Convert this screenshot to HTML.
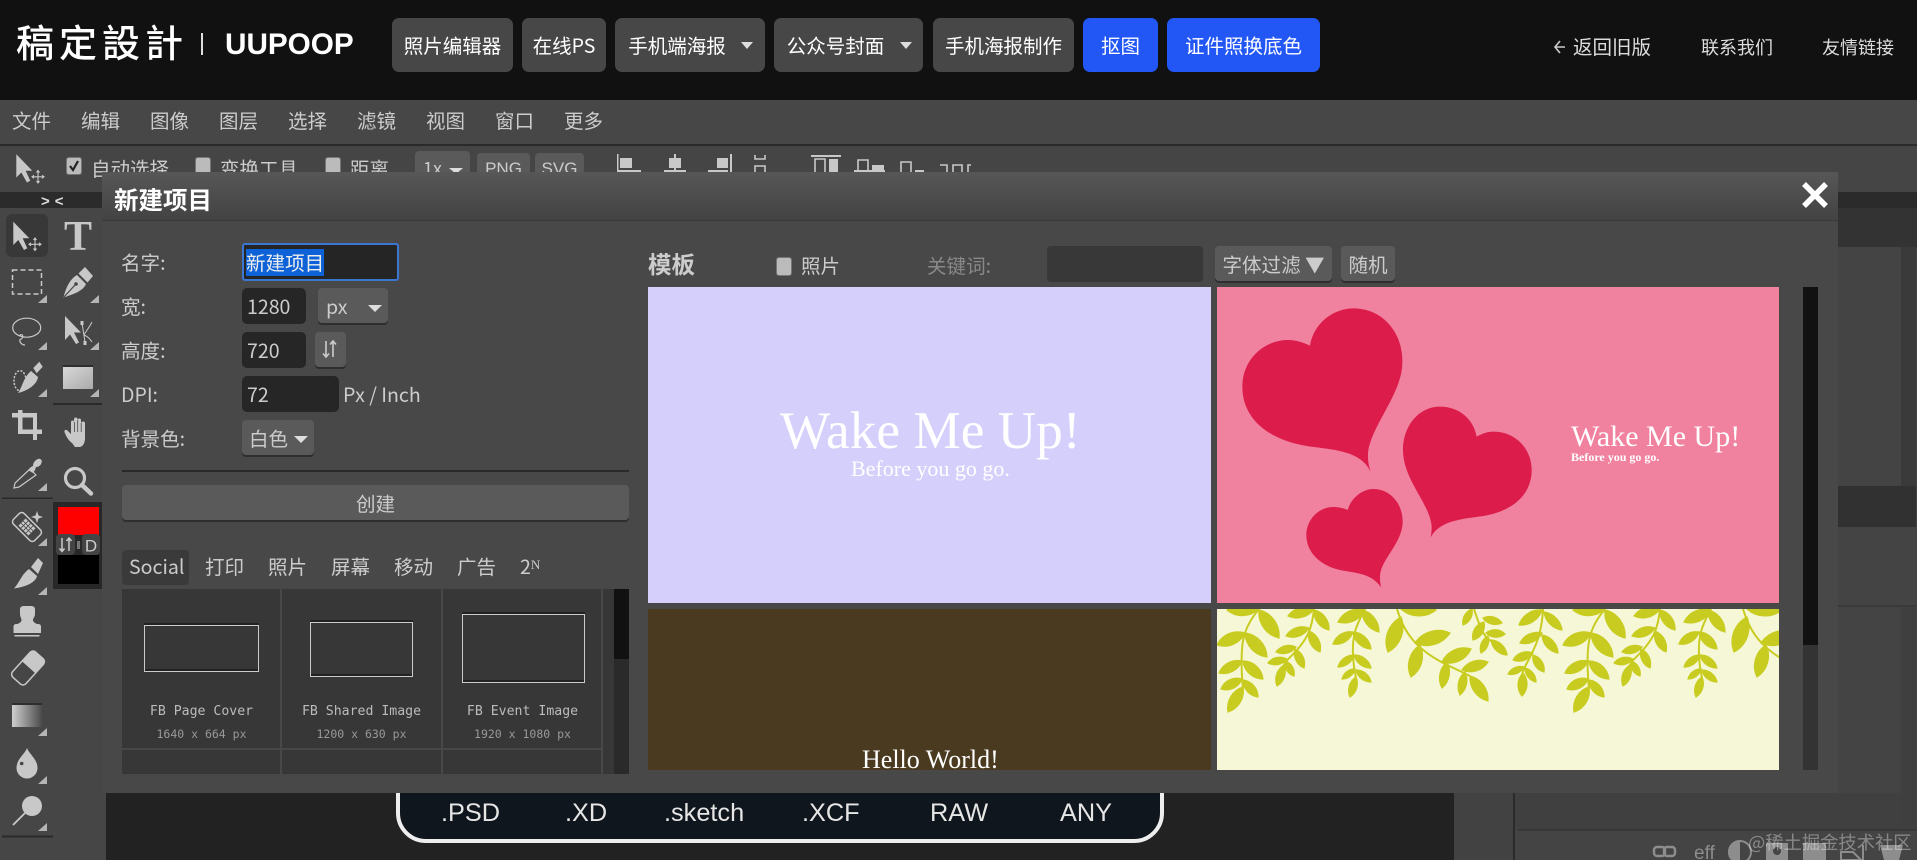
<!DOCTYPE html>
<html lang="zh-CN"><head><meta charset="utf-8"><title>稿定设计 UUPOOP</title>
<style>
html,body{margin:0;padding:0;width:1917px;height:860px;overflow:hidden;background:#444}
body{position:relative;font-family:"Noto Sans CJK SC","Liberation Sans",sans-serif;color:#ccc}
.a{position:absolute;white-space:nowrap}
.hb{position:absolute;top:18px;height:54px;line-height:53px;background:#474747;border-radius:7px;color:#fff;font-size:19.5px;text-align:center;white-space:nowrap}
.blue{background:#2257f6}
.tri{position:absolute;width:0;height:0;border-left:6px solid transparent;border-right:6px solid transparent;border-top:7px solid #ddd}
.m{position:absolute;top:108px;font-size:19.5px;line-height:24px;color:#ccc}
.tl{position:absolute;font-size:19.5px;line-height:24px;color:#ccc;top:156px;white-space:nowrap}
.cb{position:absolute;width:14px;height:16px;background:#bbb;border:1px solid #777;border-radius:3px}
.bt{position:absolute;background:#5a5a5a;border-radius:4px;box-shadow:0 2px 0 #2e2e2e;color:#ccc;text-align:center;white-space:nowrap}
.in{position:absolute;background:#262626;border-radius:5px;color:#ccc;font-size:19.56px;line-height:36px;padding-left:5px;box-sizing:border-box;white-space:nowrap}
.lb{position:absolute;left:121px;font-size:19.56px;line-height:24px;color:#ccc;white-space:nowrap}
.tab{position:absolute;top:554px;font-size:19.56px;line-height:24px;color:#ccc}
.cell{position:absolute;background:#373737}
.r{position:absolute;border:1px solid #ccc;box-sizing:border-box;box-shadow:0 -2px 0 #222,inset 0 -2px 0 #222}
.n{position:absolute;width:159px;text-align:center;font-family:"DejaVu Sans Mono",monospace;font-size:13.2px;line-height:16px;color:#bbb;top:704px}
.s{position:absolute;width:159px;text-align:center;font-family:"DejaVu Sans Mono",monospace;font-size:11.5px;line-height:14px;color:#999;top:727px}
.ext{position:absolute;top:799px;font-family:"Liberation Sans",sans-serif;font-size:25.3px;line-height:28px;color:#e6e6e6}
.sf{position:absolute;font-family:"Liberation Serif",serif;color:#fff;white-space:nowrap;line-height:1}
</style></head><body>

<!-- background panels -->
<div class="a" style="left:0;top:100px;width:1917px;height:44px;background:#474747"></div>
<div class="a" style="left:0;top:144px;width:1917px;height:2px;background:#2a2a2a"></div>
<div class="a" style="left:0;top:146px;width:1917px;height:46px;background:#454545"></div>
<div class="a" style="left:0;top:192px;width:1917px;height:16px;background:#2b2b2b"></div>
<div class="a" style="left:41px;top:195px;font-size:15px;line-height:14px;color:#ddd;font-family:'Liberation Sans',sans-serif;font-weight:bold;letter-spacing:5px">&gt;&lt;</div>
<div class="a" style="left:0;top:208px;width:106px;height:652px;background:#464646"></div>

<!-- canvas -->
<div class="a" style="left:106px;top:208px;width:1348px;height:652px;background:#222"></div>
<div class="a" style="left:396px;top:700px;width:768px;height:143px;box-sizing:border-box;background:#10161d;border:4px solid #eee;border-radius:0 0 30px 30px"></div>
<div class="ext" style="left:441px">.PSD</div>
<div class="ext" style="left:565px">.XD</div>
<div class="ext" style="left:664px">.sketch</div>
<div class="ext" style="left:802px">.XCF</div>
<div class="ext" style="left:930px">RAW</div>
<div class="ext" style="left:1060px">ANY</div>

<!-- right panels -->
<div class="a" style="left:1454px;top:208px;width:463px;height:652px;background:#424242"></div>
<div class="a" style="left:1513px;top:780px;width:2px;height:80px;background:#2a2a2a"></div>
<div class="a" style="left:1515px;top:208px;width:402px;height:39px;background:#333"></div>
<div class="a" style="left:1838px;top:247px;width:63px;height:239px;background:#444"></div>
<div class="a" style="left:1901px;top:247px;width:15px;height:239px;background:#3a3a3a"></div>
<div class="a" style="left:1838px;top:486px;width:78px;height:41px;background:#313131"></div>
<div class="a" style="left:1838px;top:527px;width:78px;height:78px;background:#444"></div>
<div class="a" style="left:1838px;top:605px;width:78px;height:2px;background:#3a3a3a"></div>
<div class="a" style="left:1838px;top:607px;width:63px;height:222px;background:#444"></div>
<div class="a" style="left:1901px;top:607px;width:15px;height:222px;background:#3f3f3f"></div>
<div class="a" style="left:1515px;top:793px;width:386px;height:36px;background:#404040"></div>
<div class="a" style="left:1518px;top:829px;width:399px;height:2px;background:#383838"></div>
<div class="a" style="left:1515px;top:831px;width:402px;height:29px;background:#444"></div>
<svg class="a" style="left:1640px;top:830px" width="277" height="30" viewBox="1640 830 277 30">
<g fill="none" stroke="#8d8d8d" stroke-width="2.5"><rect x="1654" y="847" width="11" height="9" rx="3"/><rect x="1664" y="847" width="11" height="9" rx="3"/></g>
<path d="M1740 840a12 12 0 0 0 0 24z" fill="#8d8d8d"/><circle cx="1740" cy="852" r="11" fill="none" stroke="#8d8d8d" stroke-width="2"/>
<rect x="1766" y="843" width="22" height="17" fill="#8d8d8d"/><circle cx="1777" cy="851" r="4" fill="#444"/><rect x="1803" y="843" width="23" height="17" fill="#8d8d8d"/>
<path d="M1841 852h12l8 8h-20z M1863 845v15" fill="none" stroke="#8d8d8d" stroke-width="2"/><path d="M1880 845h23l-4 15h-15z" fill="#8d8d8d"/>
</svg>
<div class="a" style="left:1694px;top:843px;font:19px/22px 'Liberation Sans',sans-serif;color:#8d8d8d">eff</div>
<div class="a" style="left:1748px;top:829px;font-size:18.3px;line-height:26px;color:rgba(255,255,255,.36)">@稀土掘金技术社区</div>

<!-- header -->
<div class="a" style="left:0;top:0;width:1917px;height:100px;background:#111"></div>
<div class="a" style="left:16px;top:18px;font-family:'Noto Sans CJK TC','Noto Sans CJK SC',sans-serif;font-size:38px;line-height:46px;color:#fff;letter-spacing:5px;font-weight:500">稿定設計</div>
<div class="a" style="left:201px;top:33px;width:2px;height:22px;background:#ddd"></div>
<div class="a" style="left:225px;top:28px;font-family:'Liberation Sans',sans-serif;font-weight:bold;font-size:29.7px;line-height:34px;color:#fff">UUPOOP</div>

<div class="hb" style="left:392px;width:121px">照片编辑器</div>
<div class="hb" style="left:522px;width:84px">在线PS</div>
<div class="hb" style="left:615px;width:150px;padding-right:26px;box-sizing:border-box">手机端海报</div><div class="tri" style="left:741px;top:42px"></div>
<div class="hb" style="left:774px;width:149px;padding-right:26px;box-sizing:border-box">公众号封面</div><div class="tri" style="left:900px;top:42px"></div>
<div class="hb" style="left:933px;width:141px">手机海报制作</div>
<div class="hb blue" style="left:1083px;width:75px">抠图</div>
<div class="hb blue" style="left:1167px;width:153px">证件照换底色</div>

<svg class="a" style="left:1552px;top:38px" width="16" height="18"><path d="M8 3 3 9l5 6M3 9h10" fill="none" stroke="#ccc" stroke-width="1.6"/></svg>
<div class="a" style="left:1573px;top:33px;font-size:19.5px;line-height:26px;color:#ddd">返回旧版</div>
<div class="a" style="left:1701px;top:34px;font-size:18px;line-height:26px;color:#ddd">联系我们</div>
<div class="a" style="left:1822px;top:34px;font-size:18px;line-height:26px;color:#ddd">友情链接</div>

<!-- menu -->
<div class="m" style="left:12px">文件</div><div class="m" style="left:81px">编辑</div><div class="m" style="left:150px">图像</div><div class="m" style="left:219px">图层</div><div class="m" style="left:288px">选择</div><div class="m" style="left:357px">滤镜</div><div class="m" style="left:426px">视图</div><div class="m" style="left:495px">窗口</div><div class="m" style="left:564px">更多</div>

<!-- toolbar -->
<div class="cb" style="left:66px;top:157px"></div>
<svg class="a" style="left:66px;top:157px" width="16" height="18"><path d="M4 9l3 4 5-9" fill="none" stroke="#222" stroke-width="2.2"/></svg>
<div class="tl" style="left:91px">自动选择</div>
<div class="cb" style="left:195px;top:157px"></div><div class="tl" style="left:220px">变换工具</div>
<div class="cb" style="left:325px;top:157px"></div><div class="tl" style="left:350px">距离</div>
<div class="bt" style="left:415px;top:151px;width:55px;height:34px;font-size:18px;line-height:34px;text-align:left;padding-left:8px;box-sizing:border-box;background:#5a5a5a">1x</div>
<div class="tri" style="left:449px;top:168px;border-left-width:7px;border-right-width:7px;border-top-width:6px"></div>
<div class="bt" style="left:477px;top:153px;width:53px;height:30px;font-size:17px;line-height:32px;font-family:'Liberation Sans',sans-serif">PNG</div>
<div class="bt" style="left:535px;top:153px;width:49px;height:30px;font-size:17px;line-height:32px;font-family:'Liberation Sans',sans-serif">SVG</div>

<svg class="a" style="left:600px;top:146px" width="380" height="30" viewBox="600 146 380 30">
<g fill="#c8c8c8">
<rect x="617" y="154" width="1.5" height="18"/><rect x="620" y="158" width="12" height="10"/><rect x="618" y="170" width="23" height="2"/>
<rect x="669" y="158" width="12" height="10"/><rect x="674" y="154" width="2" height="18"/><rect x="664" y="170" width="22" height="2"/>
<rect x="717" y="158" width="11" height="10"/><rect x="730" y="154" width="2" height="18"/><rect x="708" y="170" width="20" height="2"/>
<rect x="811" y="155" width="30" height="2"/><rect x="829" y="159" width="9" height="13"/>
<rect x="872" y="165" width="12" height="7"/><rect x="854" y="170" width="31" height="2"/>
<rect x="915" y="170" width="9" height="2"/>
</g>
<g fill="none" stroke="#c8c8c8" stroke-width="1.6">
<path d="M755 155v4h10v-4M755 172v-6h10v6"/>
<path d="M815 172v-13h10v13"/><path d="M858 172v-12h10v12"/><path d="M901 172v-10h10v10"/>
<path d="M940 165h7v7M953 172v-7h9v7M968 172v-7h3"/>
</g>
</svg>

<!-- tools -->
<svg class="a" style="left:0;top:0" width="110" height="860" viewBox="0 0 110 860">
<defs><linearGradient id="gr"><stop offset="0" stop-color="#cfcfcf"/><stop offset="1" stop-color="#4a4a4a"/></linearGradient>
<linearGradient id="rc" x1="0" x2="1" y1="0" y2="1"><stop offset="0" stop-color="#d8d8d8"/><stop offset="1" stop-color="#aaa"/></linearGradient>
<g id="mv"><path d="M13.3 221.7V245l5-5 5.700 10 3.300-1.700-4.600-10h6.600z" fill="#c8c8c8"/><path d="M35 238v12.500M29 244.300h12M33.500 240l1.500-2 1.500 2M33.500 248.500l1.500 2 1.500-2M31 242.800l-2 1.500 2 1.500M39 242.800l2 1.500-2 1.500" fill="none" stroke="#c8c8c8" stroke-width="1.100"/></g>
<path id="t" d="M9 0v8h-9z" fill="#b5b5b5"/></defs>

<use href="#mv" transform="translate(3,-67.500)"/>
<rect x="6" y="214" width="42" height="43" rx="6" fill="#383838"/>
<use href="#mv"/>
<text x="78" y="250" text-anchor="middle" font-family="Liberation Serif" font-weight="bold" font-size="42" fill="#c8c8c8">T</text>

<rect x="12.500" y="270" width="29" height="24" fill="none" stroke="#c8c8c8" stroke-width="1.500" stroke-dasharray="5 3"/>
<g fill="#b5b5b5"><use href="#t" x="38" y="295"/><use href="#t" x="90" y="295"/><use href="#t" x="38" y="342"/><use href="#t" x="90" y="342"/><use href="#t" x="38" y="389"/><use href="#t" x="90" y="389"/><use href="#t" x="38" y="483"/><use href="#t" x="38" y="538"/><use href="#t" x="38" y="587"/><use href="#t" x="38" y="728"/><use href="#t" x="38" y="776"/><use href="#t" x="38" y="823"/></g>

<g fill="#c8c8c8">
<path d="M85 267l8 9-5.500 6.500-9-9z"/><path d="M77 275l9 9c-3 7-12 10-22.500 13.500 2.500-10.500 6.500-18.500 13.500-22.500z"/>
</g>
<path d="M64 297l11-12" stroke="#464646" stroke-width="1.200"/><circle cx="76" cy="284" r="1.800" fill="#464646"/>

<ellipse cx="26.700" cy="327.700" rx="14" ry="9.500" fill="none" stroke="#c8c8c8" stroke-width="1.200"/>
<path d="M19 336c4-4 5 2 2 3-3 1 0 6 4 6" fill="none" stroke="#c8c8c8" stroke-width="1.200"/>

<path d="M65 316v24l5-5.500 6 9.500 3-1.500-5-10h7z" fill="#c8c8c8"/>
<path d="M82 323l3 19M92 322c-3 6-6 9-8 13 3 1 6 4 8 7" fill="none" stroke="#c8c8c8" stroke-width="1"/><rect x="80.500" y="321" width="3" height="4" fill="#c8c8c8"/><rect x="83.500" y="341" width="3" height="4" fill="#c8c8c8"/>

<ellipse cx="20" cy="380.700" rx="6" ry="10" fill="none" stroke="#c8c8c8" stroke-width="1.500" stroke-dasharray="2 1.500"/>
<path d="M33.300 368l6-6.300 3.400 5-6 6.600z" fill="#c8c8c8"/><path d="M31 371l7 6c-1 8-11 14-20 16 4-5 5-15 13-22z" fill="#c8c8c8"/>

<rect x="63" y="365" width="30" height="2" fill="#2e2e2e"/><rect x="63" y="367" width="30" height="22" fill="url(#rc)"/>
<rect x="53" y="403" width="49" height="2" fill="#2a2a2a"/>

<g fill="#c8c8c8"><rect x="12" y="413" width="25" height="4.500"/><rect x="18" y="410" width="4.500" height="23"/><rect x="18" y="429.500" width="24" height="4.500"/><rect x="33" y="417" width="4" height="23"/></g>

<path d="M72 443c-4-3-6-7-7.500-11-.5-2 1.500-3 3.500-1l3 3v-12c0-2 3-2 3 0v-3c0-2 3.500-2 3.500 0v1c.5-2 3.500-2 3.500 0v3c.5-2 4-2 4 0v15c0 5-2 9-6 9h-4c-1-1-2-3-3-4z" fill="#c8c8c8"/>
<path d="M74.500 422v10M77.700 420v12M81.200 423v9" stroke="#464646" stroke-width="0.800"/>

<path d="M30 469l6 6-17 12-5 1 1-5z" fill="none" stroke="#c8c8c8" stroke-width="1.200"/><path d="M28 470l3-3 2-1c0-3 2-6 5-7 3-1 5 2 3 5-1 2-3 3-5 3l-1 3-2 3z" fill="#c8c8c8"/>

<circle cx="75" cy="478" r="9.500" fill="none" stroke="#c8c8c8" stroke-width="3.200"/><path d="M82 485l9 8.500" stroke="#c8c8c8" stroke-width="4.500" stroke-linecap="round"/>
<rect x="2" y="497.500" width="51" height="1.500" fill="#2a2a2a"/>

<rect x="53" y="502" width="49" height="87" fill="#282828"/>
<rect x="58" y="507" width="41" height="28" fill="#f00"/><rect x="58" y="555" width="41" height="29" fill="#000"/>
<rect x="56" y="534" width="19" height="21" rx="4" fill="#444"/><rect x="82" y="534" width="18" height="21" rx="4" fill="#444"/>
<rect x="77" y="541" width="3" height="8" fill="#777"/>
<path d="M62 538v13M59.500 548.500l2.500 3 2.500-3M69 551v-13M66.500 541l2.500-3 2.500 3" fill="none" stroke="#ccc" stroke-width="1.500"/>
<text x="91" y="551.500" text-anchor="middle" font-family="Liberation Sans" font-size="17" fill="#ccc">D</text>

<g transform="translate(27,527) rotate(45)"><rect x="-15" y="-7.500" width="30" height="15" rx="3.500" fill="none" stroke="#c8c8c8" stroke-width="1.500"/><g fill="#c8c8c8"><rect x="-7" y="-5" width="14" height="10"/></g><path d="M-7-1.500h14M-7 1.500h14M-3.500-5v10M0-5v10M3.500-5v10" stroke="#464646" stroke-width="0.800"/></g>
<path d="M37 511l1.500 4.500 4.500 1.500-4.500 1.500-1.500 4.500-1.500-4.500-4.500-1.500 4.500-1.500z" fill="#c8c8c8"/>

<path d="M29 569l8 7c-1 6-11 11-23 12.500 6-6.500 7-13.500 15-19.500z" fill="#c8c8c8"/><path d="M31 567l7-9 5 5-5 11z" fill="#c8c8c8"/>

<path d="M20 609c0-2 2-3 4-3h7c2 0 4 1 4 3v5c0 3-2 4-2 6 0 2 2 3 4 4h1c2 0 3 1 3 3v6H13.500v-6c0-2 1-3 3-3h1c2-1 4-2 4-4 0-2-1.500-3-1.500-6z" fill="#c8c8c8"/><rect x="14.500" y="635" width="25" height="1.500" fill="#c8c8c8"/>

<g transform="translate(28,668) rotate(-48)"><rect x="-17" y="-9" width="34" height="18" rx="4" fill="none" stroke="#c8c8c8" stroke-width="1.500"/><path d="M1-9h12a4 4 0 0 1 4 4v10a4 4 0 0 1-4 4H1z" fill="#c8c8c8"/></g>

<rect x="12" y="703" width="30" height="2" fill="#2e2e2e"/><rect x="12" y="705" width="30" height="22" fill="url(#gr)"/>

<path d="M27 748c2 6 10.500 11 10.500 20a10.500 10.500 0 0 1-21 0c0-9 8.500-14 10.500-20z" fill="#c8c8c8"/><circle cx="21.700" cy="763.500" r="1.800" fill="#464646"/>

<circle cx="32" cy="806" r="10" fill="#c8c8c8"/><path d="M25 813l-12 12" stroke="#c8c8c8" stroke-width="1.800"/>
<rect x="2" y="835.500" width="51" height="2" fill="#2a2a2a"/>
</svg>

<!-- dialog -->
<div class="a" style="left:102px;top:172px;width:1736px;height:621px;background:#484848"></div>
<div class="a" style="left:102px;top:172px;width:1736px;height:48px;background:linear-gradient(#575757,#434343);border-bottom:1px solid #3a3a3a"></div>
<div class="a" style="left:114px;top:185px;font-size:24.5px;line-height:30px;font-weight:bold;color:#fff">新建项目</div>
<svg class="a" style="left:1800px;top:181px" width="30" height="28"><path d="M4 3 26 25M26 3 4 25" stroke="#fff" stroke-width="5.500"/></svg>

<!-- form -->
<div class="lb" style="top:250px">名字:</div>
<div class="lb" style="top:294px">宽:</div>
<div class="lb" style="top:338px">高度:</div>
<div class="lb" style="top:382px">DPI:</div>
<div class="lb" style="top:426px">背景色:</div>

<div class="a" style="left:242px;top:243px;width:157px;height:38px;box-sizing:border-box;background:#252525;border:2px solid #3b76d1;border-radius:3px"></div>
<div class="a" style="left:246px;top:249px;width:78px;height:27px;background:#0c62d6"></div>
<div class="a" style="left:246px;top:249px;font-size:19.56px;line-height:25px;color:#eee">新建项目</div>

<div class="in" style="left:242px;top:288px;width:64px;height:36px">1280</div>
<div class="bt" style="left:318px;top:288px;width:70px;height:35px;font-size:19.56px;line-height:35px;text-align:left;padding-left:8px;box-sizing:border-box">px</div>
<div class="tri" style="left:368px;top:305px;border-left-width:7px;border-right-width:7px;border-top-width:7px"></div>
<div class="in" style="left:242px;top:332px;width:64px;height:36px">720</div>
<div class="bt" style="left:315px;top:332px;width:31px;height:35px"></div>
<svg class="a" style="left:320px;top:340px" width="20" height="20"><path d="M6 1v16M3 13.500l3 3.500 3-3.500M13 17V1M10 4.500 13 1l3 3.500" fill="none" stroke="#ccc" stroke-width="1.600"/></svg>
<div class="in" style="left:242px;top:376px;width:97px;height:36px">72</div>
<div class="a" style="left:343px;top:382px;font-size:19.56px;line-height:24px">Px / Inch</div>
<div class="bt" style="left:242px;top:420px;width:72px;height:35px;font-size:19.56px;line-height:36px;text-align:left;padding-left:7px;box-sizing:border-box">白色</div>
<div class="tri" style="left:294px;top:436px;border-left-width:7px;border-right-width:7px;border-top-width:7px"></div>
<div class="a" style="left:122px;top:470px;width:507px;height:2px;background:#2a2a2a"></div>
<div class="bt" style="left:122px;top:485px;width:507px;height:35px;font-size:19.56px;line-height:35px">创建</div>

<!-- tabs -->
<div class="a" style="left:122px;top:550px;width:67px;height:35px;background:#3a3a3a;border-radius:4px"></div>
<div class="tab" style="left:129px">Social</div>
<div class="tab" style="left:205px">打印</div><div class="tab" style="left:268px">照片</div><div class="tab" style="left:331px">屏幕</div><div class="tab" style="left:394px">移动</div><div class="tab" style="left:457px">广告</div>
<div class="tab" style="left:520px">2<span style="font-family:'Liberation Serif',serif;font-size:13px;position:relative;top:-5px">N</span></div>

<div class="cell" style="left:122px;top:589px;width:158px;height:159px"></div>
<div class="cell" style="left:282px;top:589px;width:159px;height:159px"></div>
<div class="cell" style="left:443px;top:589px;width:158px;height:159px"></div>
<div class="cell" style="left:122px;top:750px;width:158px;height:24px"></div>
<div class="cell" style="left:282px;top:750px;width:159px;height:24px"></div>
<div class="cell" style="left:443px;top:750px;width:158px;height:24px"></div>
<div class="a" style="left:603px;top:589px;width:11px;height:185px;background:#373737"></div>
<div class="a" style="left:614px;top:589px;width:15px;height:185px;background:#2a2a2a"></div>
<div class="a" style="left:614px;top:589px;width:15px;height:70px;background:#111"></div>
<div class="r" style="left:144px;top:625px;width:115px;height:47px"></div>
<div class="r" style="left:310px;top:622px;width:103px;height:55px"></div>
<div class="r" style="left:462px;top:614px;width:123px;height:69px"></div>
<div class="n" style="left:122px">FB Page Cover</div><div class="s" style="left:122px">1640 x 664 px</div>
<div class="n" style="left:282px">FB Shared Image</div><div class="s" style="left:282px">1200 x 630 px</div>
<div class="n" style="left:443px">FB Event Image</div><div class="s" style="left:443px">1920 x 1080 px</div>

<!-- templates header -->
<div class="a" style="left:648px;top:248px;font-size:23.5px;line-height:30px;font-weight:bold;color:#ccc">模板</div>
<div class="cb" style="left:776px;top:257px;height:17px"></div>
<div class="a" style="left:801px;top:253px;font-size:19.56px;line-height:24px">照片</div>
<div class="a" style="left:927px;top:253px;font-size:19.56px;line-height:24px;color:#888">关键词:</div>
<div class="a" style="left:1047px;top:246px;width:156px;height:36px;background:#383838;border-radius:4px"></div>
<div class="bt" style="left:1215px;top:246px;width:117px;height:35px;font-size:19.56px;line-height:35px">字体过滤 ▼</div>
<div class="bt" style="left:1341px;top:246px;width:54px;height:35px;font-size:19.56px;line-height:35px">随机</div>

<!-- templates -->
<div class="a" style="left:648px;top:287px;width:563px;height:316px;background:#d5cffb"></div>
<div class="sf" style="left:780px;top:404px;font-size:53.3px">Wake Me Up!</div>
<div class="sf" style="left:851px;top:458px;font-size:22px">Before you go go.</div>

<div class="a" style="left:1217px;top:287px;width:562px;height:316px;background:#f0829f"></div>
<svg class="a" style="left:1200px;top:280px" width="420" height="330" viewBox="0 0 1260 990"><g fill="#dc1c4b">
<path d="M330 197C340 130 400 85 460 85C550 85 610 160 607 250C605 340 520 430 505 510C502 535 505 555 512 575C480 510 400 510 320 498C210 480 127 420 127 320C127 240 190 180 265 180C290 180 310 188 330 197Z"/>
<path d="M830 470C820 415 775 380 720 380C655 380 609 440 609 510C609 600 690 670 695 740C695 755 693 765 692 772C720 720 790 717 850 708C930 695 995 650 995 570C995 505 945 455 880 455C860 455 845 462 830 470Z"/>
<path d="M443 690C455 650 490 627 520 627C570 627 608 670 608 725C608 790 540 840 540 890C540 903 541 912 543 922C515 880 470 880 420 870C365 858 319 820 319 765C319 720 355 681 400 681C415 681 430 684 443 690Z"/>
</g></svg>
<div class="sf" style="left:1571px;top:422px;font-size:30px">Wake Me Up!</div>
<div class="sf" style="left:1571px;top:451px;font-size:12px;font-weight:bold">Before you go go.</div>

<div class="a" style="left:648px;top:609px;width:563px;height:161px;background:#493a20"></div>
<div class="sf" style="left:862px;top:747px;font-size:26px">Hello World!</div>

<svg class="a" style="left:1217px;top:609px;background:#f5f7d6" width="562" height="161" viewBox="0 0 562 161">
<defs><g id="lv" fill="#c9cc20" stroke="#c9cc20" stroke-width="1.200" stroke-linejoin="miter" stroke-miterlimit="12">
<g fill="none" stroke="#c9cc20" stroke-width="2"><path d="M42 0C32 12 26 24 25 40S25 70 26 80"/><path d="M97 0C95 20 90 30 79 42S70 50 66 58"/><path d="M148 0C140 15 135 25 136 45S138 60 139 70"/><path d="M180 0C186 20 195 33 210 44S240 60 253 67"/><path d="M257 0C262 15 266 28 274 32"/><path d="M326 0C325 22 320 35 312 50S307 60 305 66"/></g>
<path d="M42 0A24 24 0 0 1 10 1A24 24 0 0 1 42 0Z"/><path d="M42 1A26 26 0 0 1 62 29A26 26 0 0 1 42 1Z"/><path d="M28 24A23 23 0 0 1 0 36A23 23 0 0 1 28 24Z"/><path d="M28 24A25 25 0 0 1 50 48A25 25 0 0 1 28 24Z"/><path d="M25 52A20 20 0 0 1 2 64A20 20 0 0 1 25 52Z"/><path d="M26 52A20 20 0 0 1 46 70A20 20 0 0 1 26 52Z"/><path d="M25 70A17 17 0 0 1 4 80A17 17 0 0 1 25 70Z"/><path d="M26 71A17 17 0 0 1 41 88A17 17 0 0 1 26 71Z"/><path d="M26 78A22 22 0 0 1 11 103A22 22 0 0 1 26 78Z"/>
<path d="M97 0A21 21 0 0 1 71 7A21 21 0 0 1 97 0Z"/><path d="M97 1A19 19 0 0 1 112 21A19 19 0 0 1 97 1Z"/><path d="M92 19A19 19 0 0 1 69 27A19 19 0 0 1 92 19Z"/><path d="M92 22A18 18 0 0 1 103 43A18 18 0 0 1 92 22Z"/><path d="M79 38A16 16 0 0 1 59 43A16 16 0 0 1 79 38Z"/><path d="M78 40A16 16 0 0 1 87 59A16 16 0 0 1 78 40Z"/><path d="M70 50A15 15 0 0 1 51 54A15 15 0 0 1 70 50Z"/><path d="M68 52A13 13 0 0 1 77 67A13 13 0 0 1 68 52Z"/><path d="M67 56A17 17 0 0 1 60 77A17 17 0 0 1 67 56Z"/>
<path d="M148 1A23 23 0 0 1 121 13A23 23 0 0 1 148 1Z"/><path d="M145 1A22 22 0 0 1 162 23A22 22 0 0 1 145 1Z"/><path d="M136 23A18 18 0 0 1 116 35A18 18 0 0 1 136 23Z"/><path d="M136 23A19 19 0 0 1 154 40A19 19 0 0 1 136 23Z"/><path d="M137 46A16 16 0 0 1 121 58A16 16 0 0 1 137 46Z"/><path d="M137 46A17 17 0 0 1 154 59A17 17 0 0 1 137 46Z"/><path d="M138 60A13 13 0 0 1 125 70A13 13 0 0 1 138 60Z"/><path d="M139 61A15 15 0 0 1 154 73A15 15 0 0 1 139 61Z"/><path d="M139 68A16 16 0 0 1 133 88A16 16 0 0 1 139 68Z"/>
<path d="M184 0A27 27 0 0 0 219 1A27 27 0 0 0 184 0Z"/><path d="M184 8A28 28 0 0 1 171 43A28 28 0 0 1 184 8Z"/><path d="M198 34A28 28 0 0 1 233 24A28 28 0 0 1 198 34Z"/><path d="M203 36A25 25 0 0 1 194 68A25 25 0 0 1 203 36Z"/><path d="M225 53A24 24 0 0 1 254 40A24 24 0 0 1 225 53Z"/><path d="M230 53A21 21 0 0 1 225 79A21 21 0 0 1 230 53Z"/><path d="M245 61A21 21 0 0 1 271 53A21 21 0 0 1 245 61Z"/><path d="M248 63A19 19 0 0 1 243 86A19 19 0 0 1 248 63Z"/><path d="M253 67A24 24 0 0 1 271 92A24 24 0 0 1 253 67Z"/>
<path d="M255 0A14 14 0 0 1 246 16A14 14 0 0 1 255 0Z"/><path d="M266 9A15 15 0 0 1 285 14A15 15 0 0 1 266 9Z"/><path d="M267 13A15 15 0 0 1 256 31A15 15 0 0 1 267 13Z"/><path d="M269 24A14 14 0 0 1 288 25A14 14 0 0 1 269 24Z"/><path d="M271 27A14 14 0 0 1 264 44A14 14 0 0 1 271 27Z"/><path d="M274 31A17 17 0 0 1 290 46A17 17 0 0 1 274 31Z"/>
<path d="M325 1A22 22 0 0 1 302 16A22 22 0 0 1 325 1Z"/><path d="M327 3A21 21 0 0 1 345 21A21 21 0 0 1 327 3Z"/><path d="M325 24A19 19 0 0 1 303 34A19 19 0 0 1 325 24Z"/><path d="M325 26A19 19 0 0 1 341 44A19 19 0 0 1 325 26Z"/><path d="M316 44A16 16 0 0 1 296 51A16 16 0 0 1 316 44Z"/><path d="M316 46A15 15 0 0 1 327 63A15 15 0 0 1 316 46Z"/><path d="M307 58A14 14 0 0 1 291 65A14 14 0 0 1 307 58Z"/><path d="M308 59A14 14 0 0 1 319 73A14 14 0 0 1 308 59Z"/><path d="M306 64A17 17 0 0 1 305 87A17 17 0 0 1 306 64Z"/>
</g></defs>
<use href="#lv"/><use href="#lv" x="346"/>
</svg>

<div class="a" style="left:1803px;top:287px;width:15px;height:483px;background:#333"></div>
<div class="a" style="left:1803px;top:287px;width:15px;height:358px;background:#111"></div>

</body></html>
